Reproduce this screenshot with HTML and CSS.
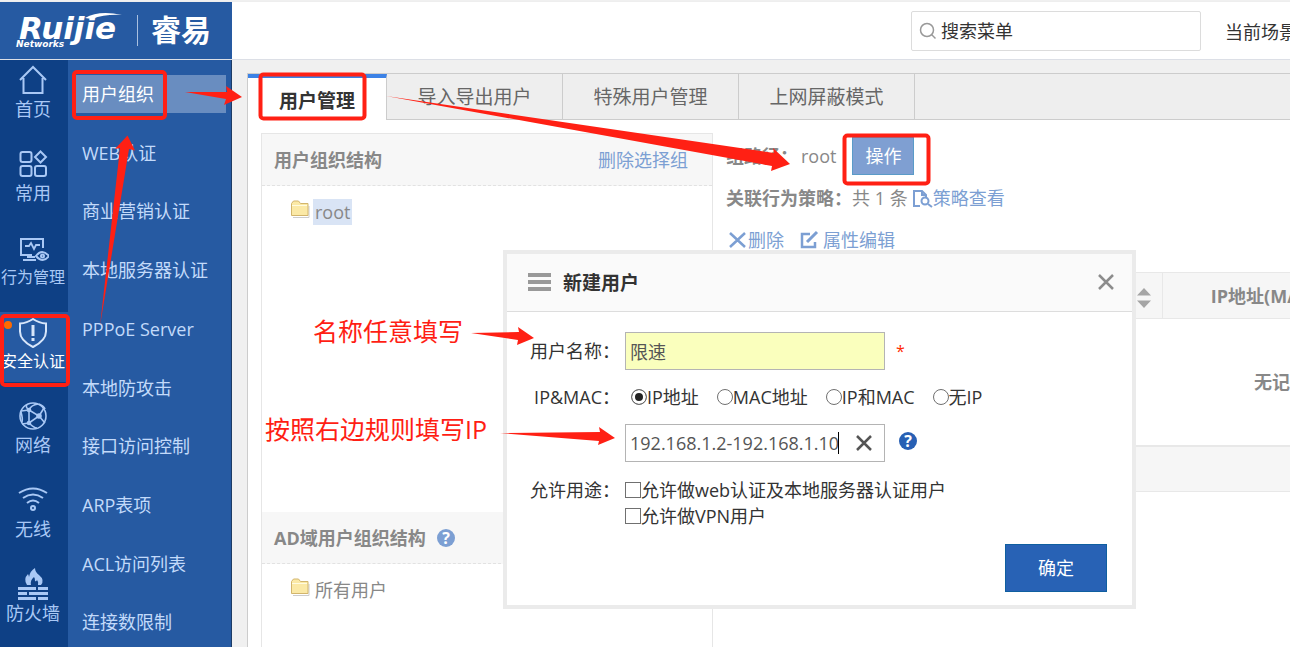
FILE: index.html
```html
<!DOCTYPE html>
<html lang="zh-CN">

<head>
    <meta charset="UTF-8">
    <meta name="viewport" content="width=device-width, initial-scale=1.0">
    <title>用户管理</title>
    <link rel="stylesheet" href="styles.css">
</head>

<body>

    <!-- Top bar -->
    <header class="topbar">
        <div class="logo">
            <svg width="200" height="44" viewBox="0 0 200 44">
                <text class="logo-name" x="4" y="29">Ruijie</text>
                <path d="M70 8Q84 0 107 5Q90 4 77 9z" />
                <text class="logo-sub" x="1" y="37">Networks</text>
                <path d="M122.500 5v31" stroke="#a9c0e0" />
                <text class="logo-cn" x="136" y="31">睿易</text>
            </svg>
        </div>
        <div class="topbar-right">
            <label class="search">
                <svg width="18" height="18" viewBox="0 0 18 18" fill="none" stroke="#999" stroke-width="1.500">
                    <circle cx="8" cy="8" r="6.500" />
                    <path d="M12.500 12.500l4 4" />
                </svg>
                <input type="text" placeholder="搜索菜单" aria-label="搜索菜单">
            </label>
            <span class="scene">当前场景</span>
        </div>
    </header>

    <div class="main">

        <!-- Primary menu -->
        <nav class="nav">
            <a class="nav-item" href="#">
                <svg width="32" height="34" viewBox="0 0 32 34" fill="none" stroke="#a9c8f5" stroke-width="2">
                    <path d="M3 18L16 5l13 13M6.500 16v15h19V16" />
                </svg>
                首页
            </a>
            <a class="nav-item" href="#">
                <svg width="32" height="34" viewBox="0 0 32 34" fill="none" stroke="#a9c8f5" stroke-width="2">
                    <rect x="3.500" y="6" width="11" height="10" rx="2" />
                    <rect x="3.500" y="20" width="11" height="10" rx="2" />
                    <rect x="18" y="20" width="11" height="10" rx="2" />
                    <path d="M23.500 5.500l5.500 5.500-5.500 5.500-5.500-5.500z" />
                </svg>
                常用
            </a>
            <a class="nav-item long" href="#">
                <svg width="32" height="34" viewBox="0 0 32 34" fill="none" stroke="#a9c8f5" stroke-width="2">
                    <path d="M15 25H4V9h22v9" />
                    <path d="M8 16h4l2-3 3 6 2-4h4" stroke-width="1.800" />
                    <path d="M6 30h13M10 27h8" />
                    <path d="M19 26q6-8 13 0q-6 8-13 0z" fill="#0e4085" />
                    <circle cx="25.500" cy="26" r="1.500" />
                </svg>
                行为管理
            </a>
            <a class="nav-item long active" href="#">
                <svg width="32" height="34" viewBox="0 0 32 34" fill="none" stroke="#d8e6fa" stroke-width="2">
                    <path d="M16 5q6 4 13 4.500v8q0 9-13 15.500q-13-6.500-13-15.500v-8q7-.5 13-4.500z" />
                    <path d="M16 11v11M16 24v3" stroke-width="3" />
                </svg>
                安全认证
            </a>
            <a class="nav-item" href="#">
                <svg width="32" height="34" viewBox="0 0 32 34" fill="none" stroke="#a9c8f5" stroke-width="1.600">
                    <circle cx="16" cy="18" r="13" />
                    <path d="M12 12L22 18L12 25zM12 12L4 13M12 12q2-5 9-6M12 12q-4-3-2-5M22 18l5-8M22 18l6 7M12 25l-7 1M12 25q5 5 8 5M4 14q2 7 1 10M22 6q5 2 6 5" />
                    <g fill="#a9c8f5">
                        <circle cx="12" cy="12" r="1.500" />
                        <circle cx="22" cy="18" r="2" />
                        <circle cx="12" cy="25" r="1.500" />
                    </g>
                </svg>
                网络
            </a>
            <a class="nav-item" href="#">
                <svg width="32" height="34" viewBox="0 0 32 34" fill="none" stroke="#a9c8f5" stroke-width="2">
                    <path d="M2 11q14-9 28 0M6 16q10-7 20 0M10 21q6-5 12 0" />
                    <circle cx="16" cy="26" r="2" />
                </svg>
                无线
            </a>
            <a class="nav-item" href="#">
                <svg width="32" height="34" viewBox="0 0 32 34" fill="#a9c8f5">
                    <path d="M10 19q-4-6 1-11q1 2 1 3q1-6 6-9q0 4 4 7q6 5 2 10h-3q1-3-1-5q-1 2-2 1q0-3-1-4q-4 3-3 8z" />
                    <path d="M1 21h18v3H1zM21 21h10v3H21zM1 26h9v3H1zM12 26h19v3H12zM1 31h18v3H1zM21 31h10v3H21z" />
                </svg>
                防火墙
            </a>
        </nav>

        <!-- Secondary menu -->
        <ul class="submenu">
            <li><a class="active" href="#">用户组织</a></li>
            <li><a href="#">WEB认证</a></li>
            <li><a href="#">商业营销认证</a></li>
            <li><a href="#">本地服务器认证</a></li>
            <li><a href="#">PPPoE Server</a></li>
            <li><a href="#">本地防攻击</a></li>
            <li><a href="#">接口访问控制</a></li>
            <li><a href="#">ARP表项</a></li>
            <li><a href="#">ACL访问列表</a></li>
            <li><a href="#">连接数限制</a></li>
        </ul>

        <!-- Page content -->
        <div class="content">
            <div class="tabs">
                <a class="tab active" href="#">用户管理</a>
                <a class="tab" href="#">导入导出用户</a>
                <a class="tab" href="#">特殊用户管理</a>
                <a class="tab" href="#">上网屏蔽模式</a>
            </div>

            <div class="panels">
                <!-- User tree -->
                <section class="tree">
                    <div class="tree-head">
                        <b>用户组织结构</b>
                        <a href="#">删除选择组</a>
                    </div>
                    <div class="tree-body tree-main">
                        <svg class="folder" width="20" height="20" viewBox="0 0 20 20">
                            <path d="M3 18.500h16V7" fill="none" stroke="#ccc" />
                            <path d="M1.500 16.500V4.500l2-2.500h5l2 2.500h7.500v12z" fill="#fbe9a6" stroke="#d2b56c" />
                            <path d="M2 6.500h15" stroke="#fffbe0" />
                        </svg>
                        <span class="node selected">root</span>
                    </div>
                    <div class="tree-head">
                        <b>AD域用户组织结构</b>
                        <svg class="help" width="18" height="18" viewBox="0 0 18 18">
                            <circle cx="9" cy="9" r="9" fill="#7c9fd3" />
                            <text x="9" y="15">?</text>
                        </svg>
                    </div>
                    <div class="tree-body">
                        <svg class="folder" width="20" height="20" viewBox="0 0 20 20">
                            <path d="M3 18.500h16V7" fill="none" stroke="#ccc" />
                            <path d="M1.500 16.500V4.500l2-2.500h5l2 2.500h7.500v12z" fill="#fbe9a6" stroke="#d2b56c" />
                            <path d="M2 6.500h15" stroke="#fffbe0" />
                        </svg>
                        <span class="node">所有用户</span>
                    </div>
                </section>

                <!-- Group detail -->
                <section class="detail">
                    <div class="row">
                        <b>组路径：</b>
                        <span class="path">root</span>
                        <button class="btn-op" type="button">操作</button>
                    </div>
                    <div class="row policy">
                        <b>关联行为策略：</b>
                        <span>共 1 条</span>
                        <a class="icon-link" href="#">
                            <svg width="22" height="20" viewBox="0 0 22 20" fill="none" stroke="#7c9fd3" stroke-width="2">
                                <path d="M9 18H3V3h8l4 4v2M11 3v4h4" />
                                <circle cx="14" cy="13" r="3.500" />
                                <path d="M17 16l4 3" />
                            </svg>策略查看</a>
                    </div>
                    <div class="row">
                        <a class="icon-link" href="#">
                            <svg width="22" height="20" viewBox="0 0 22 20" fill="none" stroke="#7c9fd3" stroke-width="2.500">
                                <path d="M4 3l15 14M19 3L4 17" />
                            </svg>删除</a>
                        <a class="icon-link edit" href="#">
                            <svg width="22" height="20" viewBox="0 0 22 20" fill="none" stroke="#7c9fd3" stroke-width="2.500">
                                <path d="M11 4H3v13h13v-5" />
                                <path d="M8 12l10-10" stroke-width="3" />
                            </svg>属性编辑</a>
                    </div>

                    <table class="users">
                        <colgroup>
                            <col class="col-name">
                            <col class="col-ip">
                            <col>
                        </colgroup>
                        <thead>
                            <tr>
                                <th class="sort">
                                    <svg width="14" height="20" viewBox="0 0 14 20" fill="#a5a5a5">
                                        <path d="M0 7.500L7 0l7 7.500zM0 12.500L7 20l7-7.500z" />
                                    </svg>
                                </th>
                                <th>IP地址(MAC地址)</th>
                                <th></th>
                            </tr>
                        </thead>
                        <tbody>
                            <tr>
                                <td colspan="3">无记录</td>
                            </tr>
                        </tbody>
                        <tfoot>
                            <tr>
                                <td colspan="3"></td>
                            </tr>
                        </tfoot>
                    </table>
                </section>
            </div>
        </div>
    </div>

    <!-- New user dialog -->
    <form class="dialog">
        <div class="dialog-head">
            <svg width="24" height="20" viewBox="0 0 24 20" fill="#999">
                <path d="M1 0h23v4H1zM1 7h23v4H1zM1 14h23v4H1z" />
            </svg>
            <h2>新建用户</h2>
            <button class="close" type="button" aria-label="关闭">
                <svg width="16" height="18" viewBox="0 0 16 18" stroke="#8c8c8c" stroke-width="2.500">
                    <path d="M1 1l14 14M15 1L1 15" />
                </svg>
            </button>
        </div>
        <div class="dialog-body">
            <div class="field">
                <label class="label" for="name">用户名称：</label>
                <input class="text name" id="name" type="text" value="限速">
                <span class="required">*</span>
            </div>
            <div class="field radios">
                <span class="label">IP&amp;MAC：</span>
                <label><input type="radio" name="mode" checked>IP地址</label>
                <label><input type="radio" name="mode">MAC地址</label>
                <label><input type="radio" name="mode">IP和MAC</label>
                <label><input type="radio" name="mode">无IP</label>
            </div>
            <div class="field">
                <span class="label"></span>
                <div class="clearable">
                    <input class="text" type="text" value="192.168.1.2-192.168.1.10" aria-label="IP地址">
                    <span class="caret"></span>
                    <button class="clear" type="button" aria-label="清除">
                        <svg width="16" height="16" viewBox="0 0 16 16" stroke="#555" stroke-width="2.500">
                            <path d="M1 1l14 14M15 1L1 15" />
                        </svg>
                    </button>
                </div>
                <svg class="help" width="18" height="18" viewBox="0 0 18 18">
                    <circle cx="9" cy="9" r="9" fill="#2860b4" />
                    <text x="9" y="15">?</text>
                </svg>
            </div>
            <div class="field usage">
                <span class="label">允许用途：</span>
                <div class="checks">
                    <label><input type="checkbox">允许做web认证及本地服务器认证用户</label>
                    <label><input type="checkbox">允许做VPN用户</label>
                </div>
            </div>
        </div>
        <div class="dialog-foot">
            <button class="btn-ok" type="button">确定</button>
        </div>
    </form>

    <!-- Red marks and notes -->
    <svg class="marks" width="1000" height="640" viewBox="0 0 1000 640">
        <g class="boxes">
            <rect x="74" y="72" width="91" height="46" rx="3" />
            <rect x="2" y="316" width="66" height="69" rx="3" />
            <rect x="260.500" y="74.500" width="104" height="44" rx="3" />
            <rect x="844.500" y="135.500" width="84" height="48" rx="3" />
        </g>
        <g class="arrows">
            <path d="M185 92L227 92L226 86L242 97L224 105L226 99z" />
            <path d="M100 326L120 148L115 149L127.500 135.500L135 150.500L129 149z" />
            <path d="M386 96L774 153L773 148L790 164L771 171L772 166z" />
            <path d="M471 333L519 332L518 327L534 338L517 345L518 340z" />
            <path d="M500 433L600 432L599 427L615 438L598 445L599 441z" />
        </g>
        <text x="313" y="341">名称任意填写</text>
        <text x="265" y="439">按照右边规则填写IP</text>
    </svg>

</body>

</html>
```

FILE: styles.css
```css
/* Page background & text styling */
* {
    box-sizing: border-box;
}

body {
    margin: 0;
    height: 100vh;
    display: flex;
    flex-direction: column;
    overflow: hidden;
    position: relative;
    background-color: #f0f0f0;
    color: #333;
    font-family: "Open Sans", "Noto Sans CJK SC", sans-serif;
    font-size: 18px;
    line-height: 26px;
}

a {
    color: #7c9fd3;
    text-decoration: none;
}

button,
input {
    font: inherit;
    margin: 0;
}

button {
    cursor: pointer;
}

/* Top bar */
.topbar {
    display: flex;
    justify-content: space-between;
    flex: none;
    height: 59px;
    margin-top: 1px;
    background-color: white;
    border-top: 1px solid #eee;
    border-bottom: 1px solid #dcdfe6;
    white-space: nowrap;
}

.logo {
    width: 232px;
    padding: 8px 15px;
    background-color: #265aa2;
}

.logo svg {
    display: block;
    fill: white;
}

.logo-name {
    font-family: "DejaVu Sans", sans-serif;
    font-size: 31px;
    font-weight: bold;
    font-style: italic;
}

.logo-sub {
    font-family: "DejaVu Sans", sans-serif;
    font-size: 9px;
    font-weight: bold;
    font-style: italic;
}

.logo-cn {
    font-size: 30px;
    font-weight: bold;
}

.topbar-right {
    display: flex;
    align-items: center;
    gap: 24px;
    width: 379px;
    overflow: hidden;
}

.search {
    display: flex;
    align-items: center;
    flex: none;
    gap: 4px;
    width: 290px;
    height: 40px;
    padding: 0 8px 0 7px;
    border: 1px solid #dcdcdc;
    border-radius: 2px;
}

.search input {
    flex: 1;
    min-width: 0;
    padding: 0;
    border: none;
    outline: none;
    background: none;
}

.search input::placeholder {
    color: #333;
}

.scene {
    padding-top: 3px;
}

/* Main area */
.main {
    display: flex;
    flex: 1;
    min-height: 0;
}

/* Primary menu */
.nav {
    display: flex;
    flex-direction: column;
    flex: none;
    gap: 14px;
    width: 68px;
    background-color: #0e4085;
}

.nav-item {
    display: flex;
    flex-direction: column;
    align-items: center;
    flex: none;
    height: 70px;
    padding: 2px 2px 0 0;
    color: #a9c8f5;
    white-space: nowrap;
    position: relative;
}

.nav-item.long {
    font-size: 16px;
}

.nav-item.active {
    background-color: #265aa2;
    color: white;
}

/* Orange dot of the open item */
.nav-item.active::before {
    content: "";
    position: absolute;
    left: 4px;
    top: 9px;
    width: 8px;
    height: 8px;
    border-radius: 50%;
    background-color: #ff6a00;
}

/* Secondary menu */
.submenu {
    display: flex;
    flex-direction: column;
    flex: none;
    width: 164px;
    margin: 0;
    padding: 0 5px 0 8px;
    list-style: none;
    background-color: #265aa2;
    border-right: 1px solid #1d3c66;
}

.submenu li {
    flex: 1;
    padding-top: 15px;
}

.submenu a {
    display: block;
    padding: 6px;
    color: #c3dafa;
}

.submenu a.active {
    background-color: #698dc0;
    color: white;
}

/* Page content */
.content {
    display: flex;
    flex-direction: column;
    flex: 1;
    min-width: 0;
    margin: 13px 0 0 15px;
    background-color: white;
    border-left: 1px solid #ccc;
}

.tabs {
    display: flex;
    flex: none;
    height: 47px;
    background-color: #eee;
    border-top: 1px solid #ccc;
    border-bottom: 1px solid #ccc;
}

.tab {
    width: 176px;
    padding-top: 10px;
    border-right: 1px solid #ccc;
    color: #666;
    font-size: 19px;
    text-align: center;
}

.tab.active {
    width: 139px;
    margin-bottom: -1px;
    border-top: 4px solid #3c82e6;
    background-color: white;
    color: #333;
    font-weight: bold;
}

.panels {
    display: flex;
    flex: 1;
    min-height: 0;
    gap: 13px;
    padding: 13px 0 0 13px;
    overflow: hidden;
}

/* User tree */
.tree {
    display: flex;
    flex-direction: column;
    flex: none;
    width: 452px;
    border: 1px solid #e6e6e6;
    border-bottom: none;
    color: #888;
}

.tree-head {
    display: flex;
    align-items: center;
    flex: none;
    height: 52px;
    padding: 0 24px 0 12px;
    background-color: #f7f7f7;
    border-bottom: 1px dashed #e2e2e2;
}

.tree-head a {
    margin-left: auto;
}

.tree-head .help {
    margin-left: 11px;
}

.tree-body {
    display: flex;
    align-items: flex-start;
    gap: 3px;
    padding: 13px 28px;
}

.tree-main {
    height: 326px;
}

.node {
    padding: 0 2px;
}

.node.selected {
    background-color: #d9e4f5;
}

/* Question mark icons */
.help text {
    fill: white;
    font-size: 16px;
    font-weight: bold;
    text-anchor: middle;
}

/* Group detail */
.detail {
    flex: 1;
    min-width: 0;
    color: #888;
    white-space: nowrap;
}

.row {
    display: flex;
    align-items: center;
    height: 46px;
}

.row.policy {
    height: 38px;
}

.path {
    margin: 0 16px 0 3px;
}

.btn-op {
    width: 62px;
    height: 38px;
    padding: 0;
    border: 1px solid #5a9bc8;
    background-color: #7f9fd2;
    color: white;
}

.icon-link {
    display: flex;
    align-items: center;
}

.row span + .icon-link {
    margin-left: 3px;
}

.icon-link.edit {
    gap: 2px;
    margin-left: 15px;
}

/* User table */
.users {
    width: 1110px;
    margin-top: 9px;
    table-layout: fixed;
    border-collapse: collapse;
}

.col-name {
    width: 436px;
}

.col-ip {
    width: 239px;
}

.users th {
    height: 46px;
    padding: 0 11px;
    background-color: #f6f6f6;
    border: 1px solid #e8e8e8;
}

.users .sort {
    text-align: right;
}

.users th svg {
    display: inline-block;
    vertical-align: middle;
}

.users td {
    height: 127px;
    padding: 0;
    border-bottom: 2px solid #e8e8e8;
    font-weight: bold;
    text-align: center;
}

.users tfoot td {
    height: 46px;
    background-color: #f6f6f6;
    border-bottom: 1px solid #e8e8e8;
}

/* New user dialog */
.dialog {
    position: absolute;
    left: 503px;
    top: 250px;
    width: 633px;
    background-color: white;
    border: 4px solid #ebebeb;
}

.dialog-head {
    display: flex;
    align-items: center;
    gap: 12px;
    height: 58px;
    padding: 0 18px 0 20px;
    background-color: #fafafa;
    border-bottom: 1px solid #ddd;
}

.dialog-head h2 {
    margin: 0;
    font-size: 19px;
}

.close {
    display: flex;
    margin-left: auto;
    padding: 0;
    border: none;
    background: none;
}

.dialog-body {
    padding: 20px 0 0 23px;
}

.field {
    display: flex;
    align-items: center;
    height: 38px;
}

.label {
    flex: none;
    width: 95px;
    padding-right: 5px;
    text-align: right;
    white-space: nowrap;
}

.text {
    width: 260px;
    height: 38px;
    padding: 0 4px;
    border: 1px solid #b4b4b4;
    outline: none;
    color: #555;
}

.text.name {
    background-color: #faffbd;
}

.required {
    margin-left: 11px;
    color: #ff2a00;
    font-size: 16px;
}

/* Radio row */
.radios {
    height: 54px;
}

.radios label {
    display: flex;
    align-items: center;
    margin-right: 18px;
    white-space: nowrap;
}

.radios .label + label {
    margin-left: 6px;
}

input[type="radio"],
input[type="checkbox"] {
    appearance: none;
    flex: none;
    width: 16px;
    height: 16px;
    border: 1px solid #707070;
    background-color: white;
}

input[type="radio"] {
    border-radius: 50%;
}

input[type="radio"]:checked {
    background-color: #222;
    box-shadow: inset 0 0 0 3px white;
}

/* IP box with caret and clear button */
.clearable {
    position: relative;
}

.clearable .text {
    display: block;
}

.caret {
    position: absolute;
    left: 213px;
    top: 8px;
    width: 1px;
    height: 22px;
    background-color: black;
}

.clear {
    position: absolute;
    right: 13px;
    top: 11px;
    display: flex;
    padding: 0;
    border: none;
    background: none;
}

.field > .help {
    margin: 0 0 5px 14px;
}

/* Check boxes */
.usage {
    align-items: flex-start;
    height: auto;
    padding-top: 15px;
}

.checks label {
    display: flex;
    align-items: center;
    white-space: nowrap;
}

.dialog-foot {
    padding: 15px 25px 13px;
    text-align: right;
}

.btn-ok {
    width: 102px;
    height: 48px;
    border: 1px solid #0f5fa0;
    background-color: #2862b5;
    color: white;
}

/* Red marks and notes */
.marks {
    position: absolute;
    left: 0;
    top: 0;
    pointer-events: none;
}

.marks text {
    fill: #ff1e14;
    font-size: 25px;
}

.boxes {
    fill: none;
    stroke: #ff2014;
    stroke-width: 4px;
}

.arrows {
    fill: #ff2014;
}
```
